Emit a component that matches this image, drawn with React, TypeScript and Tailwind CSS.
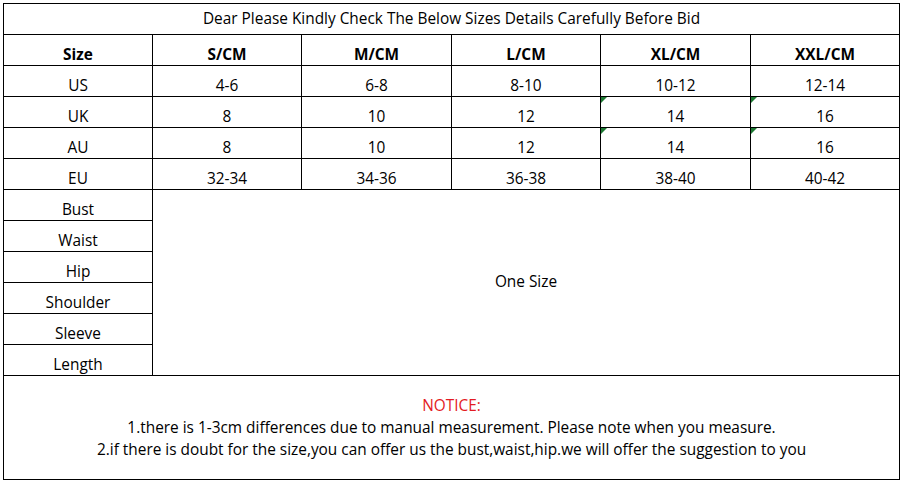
import React from "react";

const cols = ["S/CM", "M/CM", "L/CM", "XL/CM", "XXL/CM"];

const rows = [
  { label: "US", values: ["4-6", "6-8", "8-10", "10-12", "12-14"], mark: false },
  { label: "UK", values: ["8", "10", "12", "14", "16"], mark: true },
  { label: "AU", values: ["8", "10", "12", "14", "16"], mark: true },
  { label: "EU", values: ["32-34", "34-36", "36-38", "38-40", "40-42"], mark: false },
];

const measures = ["Bust", "Waist", "Hip", "Shoulder", "Sleeve", "Length"];

// little green corner flag, like the Excel "number stored as text" hint
function Flag() {
  return (
    <span className="absolute left-0 top-0 h-0 w-0 border-t-[6px] border-r-[6px] border-t-[#1e7a34] border-r-transparent" />
  );
}

export default function App() {
  return (
    <div className="w-[904px] h-[485px] bg-white text-black font-['Open_Sans',sans-serif] text-[15.4px]">
      <div className="ml-[3px] pt-[3px]">
        <div className="w-[897px] border-l border-t border-black">
          {/* Title row */}
          <div className="h-[31px] border-r border-b border-black flex items-center justify-center leading-5">
            Dear Please Kindly Check The Below Sizes Details Carefully Before Bid
          </div>

          {/* Size table */}
          <div className="grid grid-cols-[149px_149px_150px_149px_150px_149px] auto-rows-[31px]">
            <div className="border-r border-b border-black flex items-end justify-center leading-5 font-bold">
              Size
            </div>
            {cols.map((c) => (
              <div
                key={c}
                className="border-r border-b border-black flex items-end justify-center leading-5 font-bold"
              >
                {c}
              </div>
            ))}

            {rows.map((r) => (
              <React.Fragment key={r.label}>
                <div className="border-r border-b border-black flex items-end justify-center leading-5">
                  {r.label}
                </div>
                {r.values.map((v, i) => (
                  <div
                    key={i}
                    className="relative border-r border-b border-black flex items-end justify-center leading-5"
                  >
                    {r.mark && i >= 3 && <Flag />}
                    {v}
                  </div>
                ))}
              </React.Fragment>
            ))}

            {measures.map((m, i) => (
              <React.Fragment key={m}>
                <div className="border-r border-b border-black flex items-end justify-center leading-5">
                  {m}
                </div>
                {i === 0 && (
                  <div className="col-span-5 row-span-6 border-r border-b border-black flex items-center justify-center leading-5 pb-[2px]">
                    One Size
                  </div>
                )}
              </React.Fragment>
            ))}
          </div>

          {/* Notice */}
          <div className="h-[104px] border-r border-b border-black flex flex-col items-center justify-center leading-[22px] pt-[1px]">
            <p className="text-[#e31b23]">NOTICE:</p>
            <p>
              1.there is 1-3cm differences due to manual measurement. Please note when you measure.
            </p>
            <p>
              2.if there is doubt for the size,you can offer us the bust,waist,hip.we will offer the suggestion to you
            </p>
          </div>
        </div>
      </div>
    </div>
  );
}
